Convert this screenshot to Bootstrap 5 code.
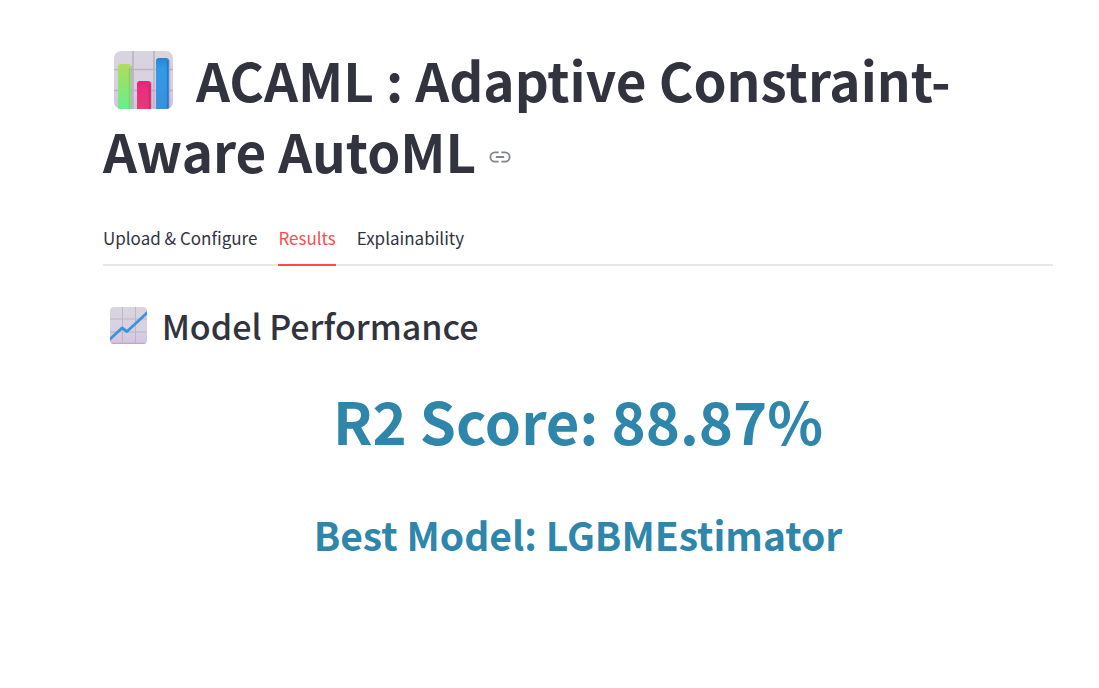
<!DOCTYPE html>
<html lang="en">
<head>
<meta charset="utf-8">
<meta name="viewport" content="width=device-width, initial-scale=1">
<title>ACAML : Adaptive Constraint-Aware AutoML</title>
<link rel="stylesheet" href="https://cdn.jsdelivr.net/npm/bootstrap@5.3.0/dist/css/bootstrap.min.css">
<style>
body{font-family:"Noto Sans CJK SC",sans-serif;color:#31333f;background:#fff}
.report{padding:44px 46px 46px 103px}
.app-title{font-size:53px;line-height:71px;font-weight:700;margin-bottom:40px}
.title-icon{width:60px;height:60px;margin:0 22px 0 11px;vertical-align:-8px}
.anchor-link{color:#83848c;line-height:1}
.anchor-link svg{width:22px;height:22px;margin-left:13px;vertical-align:5px}
.app-tabs{border-bottom:2px solid #e8e8ea;gap:21px}
.app-tabs .nav-link{font-size:17px;line-height:24px;color:inherit;background:none;padding:0 0 14px;border:0;border-bottom:2px solid transparent;border-radius:0;margin-bottom:-2px}
.app-tabs .nav-link.active{color:#ff4b4b;border-color:#ff4b4b}
.section-title{font-size:34px;line-height:44px;font-weight:500;margin:38px 0 34px}
.section-icon{width:38px;height:38px;margin:0 6px 0 7px;vertical-align:-5px}
.result-text{color:#2e86ab;font-weight:700;text-align:center}
.score{font-size:58px;line-height:76px;margin-bottom:50px}
.model{font-size:39px;line-height:52px}
</style>
</head>
<body>
<main class="report">
<h1 class="app-title"><svg class="title-icon" viewBox="0 0 60 60" aria-hidden="true">
<defs>
<linearGradient id="panel" x1="0" y1="0" x2="0" y2="1"><stop offset="0" stop-color="#d8d5df"/><stop offset=".6" stop-color="#d9d0e2"/><stop offset="1" stop-color="#d2c3df"/></linearGradient>
<linearGradient id="green" x1="0" y1="0" x2="0" y2="1"><stop offset="0" stop-color="#b0dd5b"/><stop offset="1" stop-color="#68ed8d"/></linearGradient>
<linearGradient id="pink" x1="0" y1="0" x2="0" y2="1"><stop offset="0" stop-color="#d92a70"/><stop offset=".2" stop-color="#eb2b80"/><stop offset="1" stop-color="#e53a75"/></linearGradient>
<linearGradient id="blue" x1="0" y1="0" x2="0" y2="1"><stop offset="0" stop-color="#2b84cb"/><stop offset=".2" stop-color="#319be9"/><stop offset="1" stop-color="#3c8fd9"/></linearGradient>
<clipPath id="tile"><rect x="0" y="1" width="59" height="58" rx="7"/></clipPath>
</defs>
<g clip-path="url(#tile)">
<rect width="60" height="60" fill="url(#panel)"/>
<path d="M19 0v60M40 0v60M0 19.500h60M0 40.500h60" stroke="#b9b4c1" stroke-width="1.600"/>
<path d="M17.500 16v44M37.500 32v28M55.500 10v50" stroke="#aa9abd" stroke-width="1.500" opacity=".6"/>
<path d="M4 60V17q0-3 3-3h7q3 0 3 3v43z" fill="url(#green)"/>
<path d="M23 60V34q0-3 3-3h8q3 0 3 3v26z" fill="url(#pink)"/>
<path d="M42 60V11q0-3 3-3h7q3 0 3 3v49z" fill="url(#blue)"/>
<path d="M15.500 18v42" stroke="#7fbd52" stroke-width="1.500" opacity=".5"/>
<path d="M35.500 34v26" stroke="#c01f58" stroke-width="1.500" opacity=".5"/>
<path d="M53.500 11v49" stroke="#2667b5" stroke-width="1.500" opacity=".6"/>
</g></svg>ACAML : Adaptive Constraint-Aware AutoML<a class="anchor-link" href="#results" aria-label="Link to heading"><svg viewBox="0 0 24 24" fill="none" stroke="currentColor" stroke-width="2" aria-hidden="true"><path d="M10.500 7H6.500a5 5 0 0 0 0 10h4M13.500 7h4a5 5 0 0 1 0 10h-4M7.500 12h9"/></svg></a></h1>
<div class="nav app-tabs" role="tablist">
<button class="nav-link" type="button" role="tab" aria-selected="false">Upload &amp; Configure</button>
<button class="nav-link active" type="button" role="tab" aria-selected="true">Results</button>
<button class="nav-link" type="button" role="tab" aria-selected="false">Explainability</button>
</div>
<section id="results">
<h2 class="section-title"><svg class="section-icon" viewBox="0 0 38 38" aria-hidden="true">
<defs><clipPath id="chart"><rect x="0" y="0" width="37" height="37" rx="4"/></clipPath></defs>
<g clip-path="url(#chart)">
<rect width="38" height="38" fill="url(#panel)"/>
<path d="M12.500 0v38M25.500 0v38M0 12h38M0 25h38" stroke="#bdb6c6"/>
<path d="M0 36.500h38" stroke="#bda5cf" stroke-width="1.500"/>
<path d="M-1 33L12 21l5 3.500L38 5" fill="none" stroke="#3b93d8" stroke-width="2.800" stroke-linejoin="round"/>
</g></svg> Model Performance</h2>
<p class="result-text score">R2 Score: 88.87%</p>
<p class="result-text model">Best Model: LGBMEstimator</p>
</section>
</main>
<script src="https://cdn.jsdelivr.net/npm/bootstrap@5.3.0/dist/js/bootstrap.bundle.min.js"></script>
</body>
</html>
